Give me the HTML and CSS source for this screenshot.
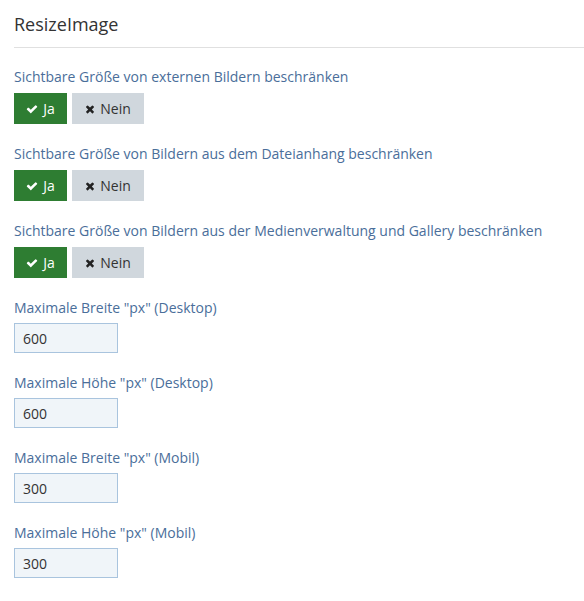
FILE: index.html
```html
<!DOCTYPE html>
<html lang="de">
<head>
  <meta charset="UTF-8" />
  <title>ResizeImage</title>
  <link rel="stylesheet" href="styles.css">
</head>
<body>
  <div class="panel">
    <h2 class="panelTitle">ResizeImage</h2>

    <div class="field">
      <label class="fieldLabel">Sichtbare Größe von externen Bildern beschränken</label>
      <div class="toggle">
        <button class="btnYes"><svg class="ico icoCheck" viewBox="0 0 1792 1792"><path d="M1671 566q0 40-28 68l-724 724-136 136q-28 28-68 28t-68-28l-136-136-362-362q-28-28-28-68t28-68l136-136q28-28 68-28t68 28l294 295 656-657q28-28 68-28t68 28l136 136q28 28 28 68z"/></svg>Ja</button>
        <button class="btnNo"><svg class="ico icoTimes" viewBox="0 0 1408 1792"><path d="M1298 1322q0 40-28 68l-136 136q-28 28-68 28t-68-28l-294-294-294 294q-28 28-68 28t-68-28l-136-136q-28-28-28-68t28-68l294-294-294-294q-28-28-28-68t28-68l136-136q28-28 68-28t68 28l294 294 294-294q28-28 68-28t68 28l136 136q28 28 28 68t-28 68l-294 294 294 294q28 28 28 68z"/></svg>Nein</button>
      </div>
    </div>

    <div class="field">
      <label class="fieldLabel">Sichtbare Größe von Bildern aus dem Dateianhang beschränken</label>
      <div class="toggle">
        <button class="btnYes"><svg class="ico icoCheck" viewBox="0 0 1792 1792"><path d="M1671 566q0 40-28 68l-724 724-136 136q-28 28-68 28t-68-28l-136-136-362-362q-28-28-28-68t28-68l136-136q28-28 68-28t68 28l294 295 656-657q28-28 68-28t68 28l136 136q28 28 28 68z"/></svg>Ja</button>
        <button class="btnNo"><svg class="ico icoTimes" viewBox="0 0 1408 1792"><path d="M1298 1322q0 40-28 68l-136 136q-28 28-68 28t-68-28l-294-294-294 294q-28 28-68 28t-68-28l-136-136q-28-28-28-68t28-68l294-294-294-294q-28-28-28-68t28-68l136-136q28-28 68-28t68 28l294 294 294-294q28-28 68-28t68 28l136 136q28 28 28 68t-28 68l-294 294 294 294q28 28 28 68z"/></svg>Nein</button>
      </div>
    </div>

    <div class="field">
      <label class="fieldLabel">Sichtbare Größe von Bildern aus der Medienverwaltung und Gallery beschränken</label>
      <div class="toggle">
        <button class="btnYes"><svg class="ico icoCheck" viewBox="0 0 1792 1792"><path d="M1671 566q0 40-28 68l-724 724-136 136q-28 28-68 28t-68-28l-136-136-362-362q-28-28-28-68t28-68l136-136q28-28 68-28t68 28l294 295 656-657q28-28 68-28t68 28l136 136q28 28 28 68z"/></svg>Ja</button>
        <button class="btnNo"><svg class="ico icoTimes" viewBox="0 0 1408 1792"><path d="M1298 1322q0 40-28 68l-136 136q-28 28-68 28t-68-28l-294-294-294 294q-28 28-68 28t-68-28l-136-136q-28-28-28-68t28-68l294-294-294-294q-28-28-28-68t28-68l136-136q28-28 68-28t68 28l294 294 294-294q28-28 68-28t68 28l136 136q28 28 28 68t-28 68l-294 294 294 294q28 28 28 68z"/></svg>Nein</button>
      </div>
    </div>

    <div class="field num">
      <label class="fieldLabel">Maximale Breite "px" (Desktop)</label>
      <input class="numInput" type="text" value="600">
    </div>

    <div class="field num">
      <label class="fieldLabel">Maximale Höhe "px" (Desktop)</label>
      <input class="numInput" type="text" value="600">
    </div>

    <div class="field num">
      <label class="fieldLabel">Maximale Breite "px" (Mobil)</label>
      <input class="numInput" type="text" value="300">
    </div>

    <div class="field num">
      <label class="fieldLabel">Maximale Höhe "px" (Mobil)</label>
      <input class="numInput" type="text" value="300">
    </div>
  </div>
</body>
</html>
```

FILE: styles.css
```css
html, body {
  margin: 0;
  padding: 0;
  background: #fff;
  font-family: "Open Sans", Arial, sans-serif;
}
.panel {
  padding: 0 0 0 14px;
}
h2.panelTitle {
  margin: 0;
  padding: 12px 0 10px;
  font-size: 18px;
  font-weight: normal;
  line-height: 25px;
  color: #333;
  border-bottom: 1px solid #e0e0e0;
}
.field {
  margin-top: 19px;
}
.field + .field {
  margin-top: 20px;
}
.field.num + .field.num {
  margin-top: 20px;
}
.fieldLabel {
  display: block;
  font-size: 14px;
  line-height: 19px;
  color: #4a6e9a;
  margin-bottom: 7px;
}
.toggle {
  display: flex;
  gap: 5px;
}
.toggle button {
  display: flex;
  align-items: center;
  justify-content: center;
  height: 31px;
  border: none;
  border-radius: 0;
  font-family: inherit;
  font-size: 14px;
  padding: 0;
  cursor: pointer;
}
.btnYes {
  width: 53px;
  background: #2e7d32;
  color: #fff;
}
.btnNo {
  width: 72px;
  background: #d0d7dd;
  color: #333;
}
.ico {
  fill: currentColor;
  margin-right: 5px;
}
.icoCheck {
  width: 12px;
  height: 12px;
}
.icoTimes {
  width: 10px;
  height: 12px;
  fill: #222;
}
.numInput {
  display: block;
  box-sizing: border-box;
  width: 104px;
  height: 30px;
  margin-top: 6px;
  padding: 0 8px;
  border: 1px solid #a9c4de;
  border-radius: 0;
  background: #f0f5f9;
  font-family: inherit;
  font-size: 14px;
  color: #333;
}
.num .fieldLabel {
  margin-bottom: 0;
}
```
